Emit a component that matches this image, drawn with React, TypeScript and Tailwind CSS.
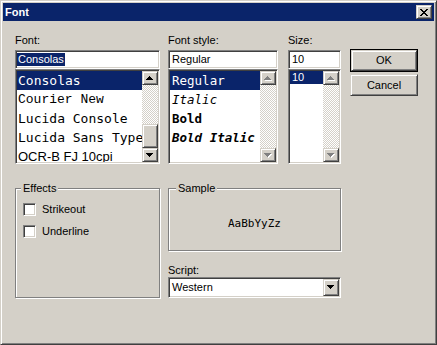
import React from "react";

const raised =
  "border border-t-[#d4d0c8] border-l-[#d4d0c8] border-r-[#404040] border-b-[#404040] shadow-[inset_1px_1px_#fff,inset_-1px_-1px_#808080] bg-[#d4d0c8]";
const sunken =
  "border border-t-[#808080] border-l-[#808080] border-r-white border-b-white shadow-[inset_1px_1px_#404040,inset_-1px_-1px_#d4d0c8]";
const etched = "border border-[#808080] shadow-[inset_1px_1px_#fff,1px_1px_#fff]";
const checker = "bg-[image:repeating-conic-gradient(#d4d0c8_0%_25%,#fff_0%_50%)] bg-[length:2px_2px]";

const fonts = [
  { name: "Consolas", cls: "font-['DejaVu_Sans_Mono',monospace]" },
  { name: "Courier New", cls: "font-['Liberation_Mono',monospace]" },
  { name: "Lucida Console", cls: "font-['DejaVu_Sans_Mono',monospace]" },
  { name: "Lucida Sans Typewriter", cls: "font-['DejaVu_Sans_Mono',monospace]" },
  { name: "OCR-B FJ 10cpi", cls: "font-['Liberation_Sans',sans-serif]" },
];

const styles = [
  { name: "Regular", cls: "" },
  { name: "Italic", cls: "italic" },
  { name: "Bold", cls: "font-bold" },
  { name: "Bold Italic", cls: "font-bold italic" },
];

// 7x4 pixel triangle, like the Marlett glyphs
function Arrow({ dir, disabled }: { dir: "up" | "down"; disabled?: boolean }) {
  const rows = dir === "up" ? [[3, 1], [2, 3], [1, 5], [0, 7]] : [[0, 7], [1, 5], [2, 3], [3, 1]];
  return (
    <svg width="8" height="5" viewBox="0 0 8 5" shapeRendering="crispEdges">
      {disabled &&
        rows.map(([x, w], i) => <rect key={"s" + i} x={x + 1} y={i + 1} width={w} height={1} fill="#fff" />)}
      {rows.map(([x, w], i) => (
        <rect key={i} x={x} y={i} width={w} height={1} fill={disabled ? "#808080" : "#000"} />
      ))}
    </svg>
  );
}

function ScrollBar({ thumb, disabled }: { thumb?: boolean; disabled?: boolean }) {
  return (
    <div className="w-[16px] flex flex-col">
      <div className={`${raised} h-[14px] flex items-center justify-center`}>
        <Arrow dir="up" disabled={disabled} />
      </div>
      <div className={`flex-1 ${checker}`} />
      {thumb && <div className={`${raised} h-[24px]`} />}
      <div className={`${raised} h-[14px] flex items-center justify-center`}>
        <Arrow dir="down" disabled={disabled} />
      </div>
    </div>
  );
}

export default function App() {
  return (
    <div className="w-[437px] h-[345px] bg-[#d4d0c8] font-['Liberation_Sans',Arial,sans-serif] text-[11px] leading-[13px] text-black">
      <div className={`h-full flex flex-col p-[2px] ${raised}`}>
        {/* title bar */}
        <div className="h-[18px] bg-[#0a246a] flex items-center justify-between pl-[2px] pr-[2px]">
          <span className="text-white font-bold text-[11px]">Font</span>
          <div className={`${raised} w-[16px] h-[14px] flex items-center justify-center`}>
            <svg width="8" height="7" viewBox="0 0 8 7" shapeRendering="crispEdges">
              <path d="M0 0h2v1h1v1h2v-1h1v-1h2v1h-1v1h-1v1h-1v1h1v1h1v1h1v1h-2v-1h-1v-1h-2v1h-1v1h-2v-1h1v-1h1v-1h1v-1h-1v-1h-1v-1h-1z" fill="#000" />
            </svg>
          </div>
        </div>

        <div className="flex pl-[12px] pt-[13px]">
          {/* Font */}
          <div className="w-[145px] flex flex-col">
            <div className="h-[16px]">Font:</div>
            <div className={`${sunken} h-[19px] bg-white flex items-center pl-[1px]`}>
              <span className="bg-[#0a246a] text-white px-[1px]">Consolas</span>
            </div>
            <div className={`${sunken} h-[95px] bg-white flex p-[1px]`}>
              <div className="flex-1 overflow-hidden">
                {fonts.map((f, i) => (
                  <div
                    key={f.name}
                    className={`h-[19px] flex items-center pl-[1px] whitespace-nowrap text-[13px] leading-[15px] ${f.cls} ${
                      i === 0 ? "bg-[#0a246a] text-white" : ""
                    }`}
                  >
                    {f.name}
                  </div>
                ))}
              </div>
              <ScrollBar thumb />
            </div>
          </div>

          {/* Font style */}
          <div className="w-[110px] ml-[8px] flex flex-col">
            <div className="h-[16px]">Font style:</div>
            <div className={`${sunken} h-[19px] bg-white flex items-center pl-[3px]`}>Regular</div>
            <div className={`${sunken} h-[95px] bg-white flex p-[1px]`}>
              <div className="flex-1 overflow-hidden">
                {styles.map((s, i) => (
                  <div
                    key={s.name}
                    className={`h-[19px] flex items-center pl-[2px] whitespace-nowrap text-[12.5px] leading-[15px] font-['DejaVu_Sans_Mono',monospace] ${s.cls} ${
                      i === 0 ? "bg-[#0a246a] text-white" : ""
                    }`}
                  >
                    {s.name}
                  </div>
                ))}
              </div>
              <ScrollBar disabled />
            </div>
          </div>

          {/* Size */}
          <div className="w-[53px] ml-[10px] flex flex-col">
            <div className="h-[16px]">Size:</div>
            <div className={`${sunken} h-[19px] bg-white flex items-center pl-[3px]`}>10</div>
            <div className={`${sunken} h-[95px] bg-white flex p-[1px]`}>
              <div className="flex-1 overflow-hidden">
                <div className="h-[13px] flex items-center pl-[2px] bg-[#0a246a] text-white">10</div>
              </div>
              <ScrollBar disabled />
            </div>
          </div>

          {/* buttons */}
          <div className="w-[68px] ml-[9px] flex flex-col pt-[15px]">
            <div className="h-[23px] border border-black flex">
              <div className={`${raised} flex-1 flex items-center justify-center`}>OK</div>
            </div>
            <div className={`${raised} h-[22px] mt-[2px] flex items-center justify-center`}>Cancel</div>
          </div>
        </div>

        <div className="flex pl-[12px] mt-[24px]">
          {/* Effects */}
          <div className={`${etched} relative w-[145px] h-[110px] flex flex-col gap-[9px] pt-[14px] pl-[7px]`}>
            <span className="absolute -top-[7px] left-[5px] px-[2px] bg-[#d4d0c8]">Effects</span>
            {["Strikeout", "Underline"].map((label) => (
              <div key={label} className="flex items-center h-[13px]">
                <div className={`${sunken} w-[13px] h-[13px] bg-white`} />
                <span className="ml-[6px]">{label}</span>
              </div>
            ))}
          </div>

          <div className="w-[173px] ml-[8px] flex flex-col">
            <div className={`${etched} relative h-[63px] flex items-center justify-center pt-[8px]`}>
              <span className="absolute -top-[7px] left-[7px] px-[2px] bg-[#d4d0c8]">Sample</span>
              <span className="font-['DejaVu_Sans_Mono',monospace] text-[11px]">AaBbYyZz</span>
            </div>
            <div className="mt-[13px] h-[13px]">Script:</div>
            <div className={`${sunken} h-[21px] bg-white flex p-[1px]`}>
              <div className="flex-1 flex items-center pl-[2px]">Western</div>
              <div className={`${raised} w-[16px] flex items-center justify-center`}>
                <Arrow dir="down" />
              </div>
            </div>
          </div>
        </div>
      </div>
    </div>
  );
}
